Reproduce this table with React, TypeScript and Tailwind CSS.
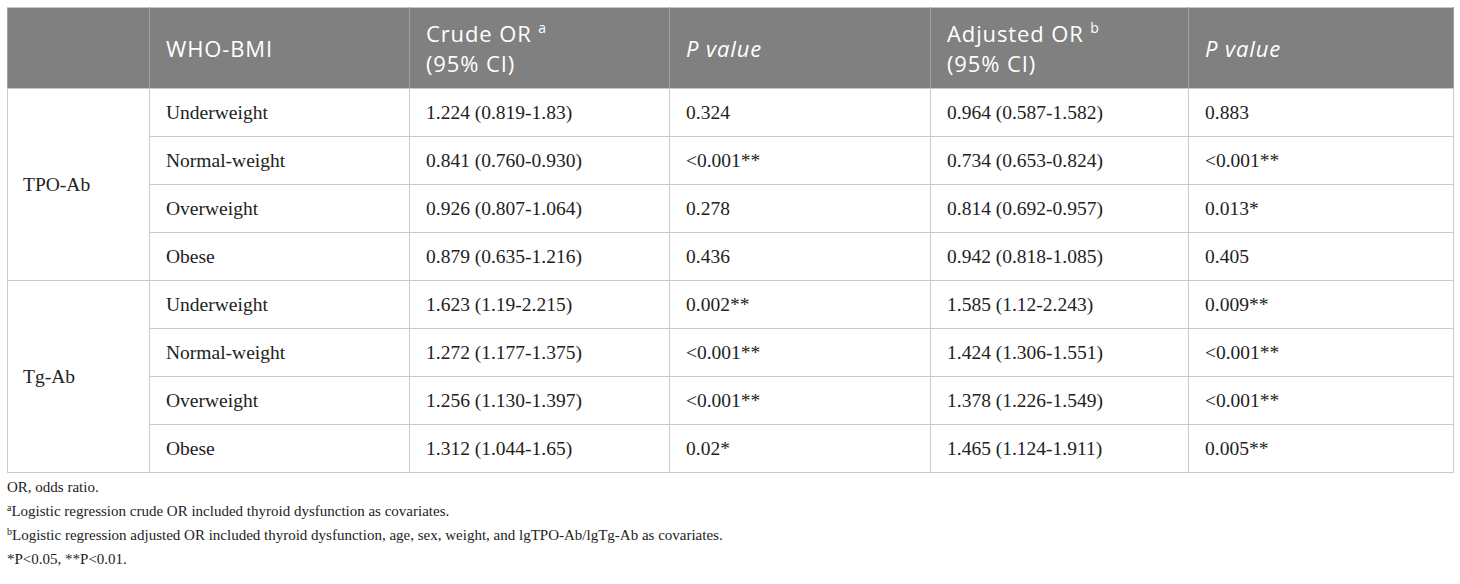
const rows = [
  { group: 'TPO-Ab', bmi: 'Underweight', crude: '1.224 (0.819-1.83)', p1: '0.324', adj: '0.964 (0.587-1.582)', p2: '0.883' },
  { group: 'TPO-Ab', bmi: 'Normal-weight', crude: '0.841 (0.760-0.930)', p1: '<0.001**', adj: '0.734 (0.653-0.824)', p2: '<0.001**' },
  { group: 'TPO-Ab', bmi: 'Overweight', crude: '0.926 (0.807-1.064)', p1: '0.278', adj: '0.814 (0.692-0.957)', p2: '0.013*' },
  { group: 'TPO-Ab', bmi: 'Obese', crude: '0.879 (0.635-1.216)', p1: '0.436', adj: '0.942 (0.818-1.085)', p2: '0.405' },
  { group: 'Tg-Ab', bmi: 'Underweight', crude: '1.623 (1.19-2.215)', p1: '0.002**', adj: '1.585 (1.12-2.243)', p2: '0.009**' },
  { group: 'Tg-Ab', bmi: 'Normal-weight', crude: '1.272 (1.177-1.375)', p1: '<0.001**', adj: '1.424 (1.306-1.551)', p2: '<0.001**' },
  { group: 'Tg-Ab', bmi: 'Overweight', crude: '1.256 (1.130-1.397)', p1: '<0.001**', adj: '1.378 (1.226-1.549)', p2: '<0.001**' },
  { group: 'Tg-Ab', bmi: 'Obese', crude: '1.312 (1.044-1.65)', p1: '0.02*', adj: '1.465 (1.124-1.911)', p2: '0.005**' },
]

const th = "border border-[#c8c8c8] border-x-[#a0a0a0] px-4 text-left align-middle font-normal"
const td = "border border-[#cbcbcb] px-4 h-[48px] align-middle"

export default function App() {
  return (
    <div className="bg-white p-[7px] w-[1460px] h-[584px] text-[#222]">
      <table className="table-fixed border-collapse w-[1446px] font-['Liberation_Serif',serif] text-[19.5px] leading-[24px]">
        <colgroup>
          <col className="w-[142px]" />
          <col className="w-[260px]" />
          <col className="w-[260px]" />
          <col className="w-[261px]" />
          <col className="w-[258px]" />
          <col className="w-[265px]" />
        </colgroup>
        <thead className="bg-[#808080] text-white font-['Open_Sans',sans-serif] text-[22px] tracking-[0.04em] leading-[30px]">
          <tr className="h-[81px]">
            <th className={th}></th>
            <th className={th}>WHO-BMI</th>
            <th className={th}>
              <div>Crude OR <span className="relative -top-[9px] text-[14px] leading-none">a</span></div>
              <div>(95% CI)</div>
            </th>
            <th className={`${th} italic`}>P value</th>
            <th className={th}>
              <div>Adjusted OR <span className="relative -top-[9px] text-[14px] leading-none">b</span></div>
              <div>(95% CI)</div>
            </th>
            <th className={`${th} italic`}>P value</th>
          </tr>
        </thead>
        <tbody>
          {rows.map((r, i) => (
            <tr key={i}>
              {i % 4 === 0 && (
                <td rowSpan={4} className={`${td} pl-[15px]`}>{r.group}</td>
              )}
              <td className={td}>{r.bmi}</td>
              <td className={td}>{r.crude}</td>
              <td className={td}>{r.p1}</td>
              <td className={td}>{r.adj}</td>
              <td className={td}>{r.p2}</td>
            </tr>
          ))}
        </tbody>
      </table>
      <div className="mt-[2px] font-['Liberation_Serif',serif] text-[15px] leading-[24px] text-[#222]">
        <p>OR, odds ratio.</p>
        <p><span className="relative -top-[5px] text-[10px] leading-none">a</span>Logistic regression crude OR included thyroid dysfunction as covariates.</p>
        <p><span className="relative -top-[5px] text-[10px] leading-none">b</span>Logistic regression adjusted OR included thyroid dysfunction, age, sex, weight, and lgTPO-Ab/lgTg-Ab as covariates.</p>
        <p>*P&lt;0.05, **P&lt;0.01.</p>
      </div>
    </div>
  )
}
